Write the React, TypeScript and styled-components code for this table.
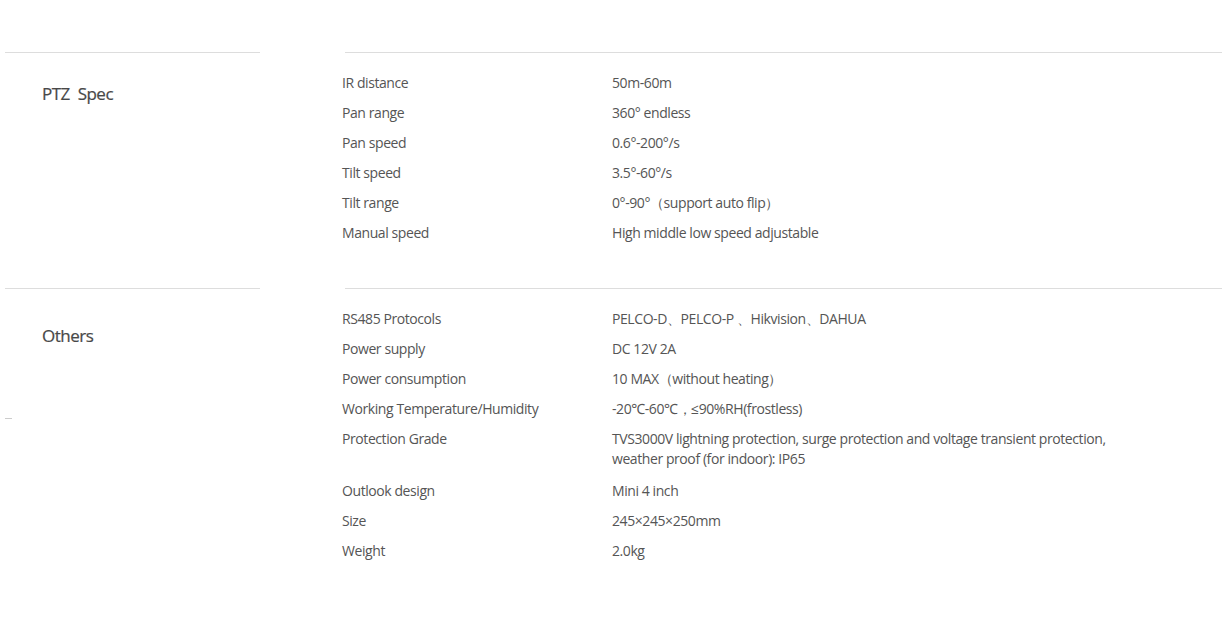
import React from "react";
import styled, { createGlobalStyle } from "styled-components";

const Global = createGlobalStyle`
  html, body { margin: 0; padding: 0; background: #fff; }
  body { font-family: "Open Sans", "Noto Sans", sans-serif; color: #555; }
`;

const Page = styled.div`
  width: 1230px;
  padding-top: 52px;
  box-sizing: border-box;
`;

const Section = styled.section<{ $gapAfter: number }>`
  display: grid;
  grid-template-columns: 255px 1fr;
  column-gap: 82px;
  padding-left: 5px;
  padding-right: 8px;
  margin-bottom: ${(p) => p.$gapAfter}px;
`;

const Side = styled.div<{ $headTop: number }>`
  border-top: 1px solid #ddd;
  padding-top: ${(p) => p.$headTop}px;
  padding-left: 37px;
`;

const Heading = styled.h2`
  margin: 0;
  font-size: 17px;
  font-weight: 400;
  line-height: 22px;
  color: #484848;
  letter-spacing: -0.5px;
  white-space: pre;
  -webkit-text-stroke: 0.2px #484848;
`;

const Tick = styled.div<{ $top: number }>`
  width: 7px;
  height: 1px;
  background: #ccc;
  margin-left: -37px;
  margin-top: ${(p) => p.$top}px;
`;

const Main = styled.div`
  position: relative;
  padding-top: 16px;
  &::before {
    content: "";
    position: absolute;
    top: 0;
    left: 3px;
    right: 0;
    border-top: 1px solid #ddd;
  }
`;

const Row = styled.div<{ $tall?: boolean }>`
  display: grid;
  grid-template-columns: 270px 520px;
  padding: 5px 0 ${(p) => (p.$tall ? 7 : 5)}px;
  font-size: 14px;
  line-height: 20px;
  color: #555;
  letter-spacing: -0.42px;
`;

const Label = styled.div``;
const Value = styled.div``;

type Spec = [string, string];

const ptz: Spec[] = [
  ["IR distance", "50m-60m"],
  ["Pan range", "360° endless"],
  ["Pan speed", "0.6°-200°/s"],
  ["Tilt speed", "3.5°-60°/s"],
  ["Tilt range", "0°-90°（support auto flip）"],
  ["Manual speed", "High middle low speed adjustable"],
];

const others: Spec[] = [
  ["RS485 Protocols", "PELCO-D、PELCO-P 、Hikvision、DAHUA"],
  ["Power supply", "DC 12V 2A"],
  ["Power consumption", "10 MAX（without heating）"],
  ["Working Temperature/Humidity", "-20℃-60℃，≤90%RH(frostless)"],
  [
    "Protection Grade",
    "TVS3000V lightning protection, surge protection and voltage transient protection, weather proof (for indoor): IP65",
  ],
  ["Outlook design", "Mini 4 inch"],
  ["Size", "245×245×250mm"],
  ["Weight", "2.0kg"],
];

const Rows = ({ items }: { items: Spec[] }) => (
  <Main>
    {items.map(([l, v]) => (
      <Row key={l} $tall={v.length > 70}>
        <Label>{l}</Label>
        <Value>{v}</Value>
      </Row>
    ))}
  </Main>
);

export default function App() {
  return (
    <Page>
      <Global />
      <Section $gapAfter={40}>
        <Side $headTop={30}>
          <Heading>{"PTZ  Spec"}</Heading>
        </Side>
        <Rows items={ptz} />
      </Section>
      <Section $gapAfter={0}>
        <Side $headTop={36}>
          <Heading>Others</Heading>
          <Tick $top={71} />
        </Side>
        <Rows items={others} />
      </Section>
    </Page>
  );
}
